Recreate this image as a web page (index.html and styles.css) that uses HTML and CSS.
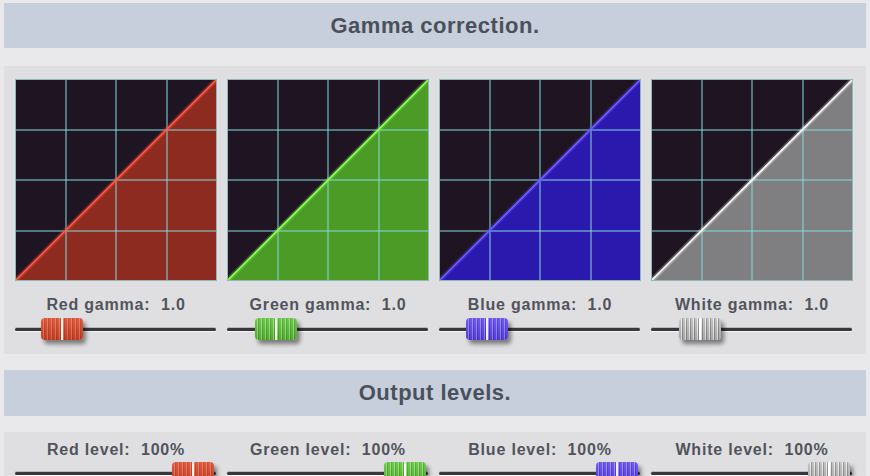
FILE: index.html
```html
<!DOCTYPE html>
<html>
<head>
<meta charset="utf-8">
<link rel="stylesheet" href="styles.css">
</head>
<body>
<div class="header">Gamma correction.</div>
<div class="panel gamma">
  <div class="col">
    <svg class="graph" width="202" height="202" viewBox="0 0 202 202">
      <rect x="0" y="0" width="202" height="202" fill="#1f1421"/>
      <polygon points="0,202 202,0 202,202" fill="#8e2b20"/>
      <g class="grid"><line x1="51" y1="0" x2="51" y2="202"/><line x1="101" y1="0" x2="101" y2="202"/><line x1="152" y1="0" x2="152" y2="202"/><line x1="0" y1="51" x2="202" y2="51"/><line x1="0" y1="101" x2="202" y2="101"/><line x1="0" y1="152" x2="202" y2="152"/></g>
      <line x1="0" y1="202" x2="202" y2="0" stroke="#ff4a36" stroke-width="5" opacity="0.3"/>
      <line x1="0" y1="202" x2="202" y2="0" stroke="#ff5a44" stroke-width="1.6"/>
      <rect x="0.5" y="0.5" width="201" height="201" fill="none" stroke="#8fb8bc" stroke-width="1"/>
    </svg>
    <div class="label">Red gamma:  1.0</div>
    <div class="slider"><div class="track"></div><div class="thumb red" style="left:26px"></div></div>
  </div>
  <div class="col">
    <svg class="graph" width="202" height="202" viewBox="0 0 202 202">
      <rect x="0" y="0" width="202" height="202" fill="#1f1421"/>
      <polygon points="0,202 202,0 202,202" fill="#4c9b27"/>
      <g class="grid"><line x1="51" y1="0" x2="51" y2="202"/><line x1="101" y1="0" x2="101" y2="202"/><line x1="152" y1="0" x2="152" y2="202"/><line x1="0" y1="51" x2="202" y2="51"/><line x1="0" y1="101" x2="202" y2="101"/><line x1="0" y1="152" x2="202" y2="152"/></g>
      <line x1="0" y1="202" x2="202" y2="0" stroke="#78f048" stroke-width="5" opacity="0.3"/>
      <line x1="0" y1="202" x2="202" y2="0" stroke="#8cff5a" stroke-width="1.6"/>
      <rect x="0.5" y="0.5" width="201" height="201" fill="none" stroke="#8fb8bc" stroke-width="1"/>
    </svg>
    <div class="label">Green gamma:  1.0</div>
    <div class="slider"><div class="track"></div><div class="thumb green" style="left:28px"></div></div>
  </div>
  <div class="col">
    <svg class="graph" width="202" height="202" viewBox="0 0 202 202">
      <rect x="0" y="0" width="202" height="202" fill="#1f1421"/>
      <polygon points="0,202 202,0 202,202" fill="#2b18ad"/>
      <g class="grid"><line x1="51" y1="0" x2="51" y2="202"/><line x1="101" y1="0" x2="101" y2="202"/><line x1="152" y1="0" x2="152" y2="202"/><line x1="0" y1="51" x2="202" y2="51"/><line x1="0" y1="101" x2="202" y2="101"/><line x1="0" y1="152" x2="202" y2="152"/></g>
      <line x1="0" y1="202" x2="202" y2="0" stroke="#5a48ff" stroke-width="5" opacity="0.3"/>
      <line x1="0" y1="202" x2="202" y2="0" stroke="#6e5cff" stroke-width="1.6"/>
      <rect x="0.5" y="0.5" width="201" height="201" fill="none" stroke="#8fb8bc" stroke-width="1"/>
    </svg>
    <div class="label">Blue gamma:  1.0</div>
    <div class="slider"><div class="track"></div><div class="thumb blue" style="left:27px"></div></div>
  </div>
  <div class="col">
    <svg class="graph" width="202" height="202" viewBox="0 0 202 202">
      <rect x="0" y="0" width="202" height="202" fill="#1f1421"/>
      <polygon points="0,202 202,0 202,202" fill="#7f7f81"/>
      <g class="grid"><line x1="51" y1="0" x2="51" y2="202"/><line x1="101" y1="0" x2="101" y2="202"/><line x1="152" y1="0" x2="152" y2="202"/><line x1="0" y1="51" x2="202" y2="51"/><line x1="0" y1="101" x2="202" y2="101"/><line x1="0" y1="152" x2="202" y2="152"/></g>
      <line x1="0" y1="202" x2="202" y2="0" stroke="#ffffff" stroke-width="5" opacity="0.25"/>
      <line x1="0" y1="202" x2="202" y2="0" stroke="#ffffff" stroke-width="1.6"/>
      <rect x="0.5" y="0.5" width="201" height="201" fill="none" stroke="#8fb8bc" stroke-width="1"/>
    </svg>
    <div class="label">White gamma:  1.0</div>
    <div class="slider"><div class="track"></div><div class="thumb white" style="left:28px"></div></div>
  </div>
</div>
<div class="header second">Output levels.</div>
<div class="panel levels">
  <div class="col">
    <div class="label">Red level:  100%</div>
    <div class="slider"><div class="track"></div><div class="thumb red" style="left:157px"></div></div>
  </div>
  <div class="col">
    <div class="label">Green level:  100%</div>
    <div class="slider"><div class="track"></div><div class="thumb green" style="left:157px"></div></div>
  </div>
  <div class="col">
    <div class="label">Blue level:  100%</div>
    <div class="slider"><div class="track"></div><div class="thumb blue" style="left:157px"></div></div>
  </div>
  <div class="col">
    <div class="label">White level:  100%</div>
    <div class="slider"><div class="track"></div><div class="thumb white" style="left:157px"></div></div>
  </div>
</div>
</body>
</html>
```
FILE: styles.css
```css
html, body {
  margin: 0;
  padding: 0;
  background: #e9e9eb;
  font-family: "Liberation Sans", Arial, sans-serif;
  overflow: hidden;
}
body {
  width: 870px;
  height: 476px;
  padding-top: 3px;
  box-sizing: border-box;
}
.header {
  margin: 0 4px;
  height: 45px;
  background: #c6cfdb;
  color: #4b505b;
  font-weight: bold;
  font-size: 22px;
  letter-spacing: 0.5px;
  display: flex;
  align-items: center;
  justify-content: center;
}
.header.second {
  margin-top: 16px;
  height: 46px;
}
.panel {
  margin: 18px 4px 0;
  background: #dfdfe1;
  display: grid;
  grid-template-columns: repeat(4, 202px);
  column-gap: 10px;
  padding: 13px 13px 13px 11px;
}
.panel.levels {
  margin-top: 16px;
  padding-top: 8px;
  padding-bottom: 0;
}
.col {
  display: flex;
  flex-direction: column;
}
.graph {
  display: block;
  width: 202px;
  height: 202px;
}
.grid line {
  stroke: #86dade;
  stroke-width: 1.5;
  opacity: 0.68;
}
.label {
  margin-top: 14px;
  height: 20px;
  line-height: 20px;
  font-size: 16px;
  font-weight: bold;
  letter-spacing: 0.8px;
  color: #51545d;
  text-align: center;
  white-space: pre;
}
.levels .label {
  margin-top: 0;
}
.slider {
  position: relative;
  height: 24px;
  margin-top: 2px;
}
.levels .slider {
  margin-top: 1px;
}
.track {
  position: absolute;
  left: 0;
  right: 1px;
  top: 11px;
  height: 3px;
  border-radius: 2px;
  background: #38383c;
  box-shadow: 0 1px 0 #f5f5f6, 0 -1px 0 #b9b9bd;
}
.thumb {
  position: absolute;
  top: 1px;
  width: 42px;
  height: 22px;
  border-radius: 4px;
  box-shadow: 3px 4px 4px rgba(0, 0, 0, 0.45);
}
.thumb.red {
  background:
    linear-gradient(90deg, transparent 20px, #fff5ee 20px, #fff5ee 22px, transparent 22px),
    linear-gradient(180deg, rgba(255,255,255,0.12), rgba(0,0,0,0.12)),
    repeating-linear-gradient(90deg, #d9462a 0 2px, #f0704e 2px 3px, #c53a22 3px 4px);
}
.thumb.green {
  background:
    linear-gradient(90deg, transparent 20px, #f2fff0 20px, #f2fff0 22px, transparent 22px),
    linear-gradient(180deg, rgba(255,255,255,0.12), rgba(0,0,0,0.12)),
    repeating-linear-gradient(90deg, #5fc03c 0 2px, #8ee46a 2px 3px, #4aa52c 3px 4px);
}
.thumb.blue {
  background:
    linear-gradient(90deg, transparent 20px, #f2f0ff 20px, #f2f0ff 22px, transparent 22px),
    linear-gradient(180deg, rgba(255,255,255,0.12), rgba(0,0,0,0.12)),
    repeating-linear-gradient(90deg, #5f46ee 0 2px, #9282ff 2px 3px, #4a32d8 3px 4px);
}
.thumb.white {
  background:
    linear-gradient(90deg, transparent 20px, #ffffff 20px, #ffffff 22px, transparent 22px),
    linear-gradient(180deg, rgba(255,255,255,0.12), rgba(0,0,0,0.12)),
    repeating-linear-gradient(90deg, #bdbdbd 0 2px, #ececec 2px 3px, #8e8e8e 3px 4px);
}
```
